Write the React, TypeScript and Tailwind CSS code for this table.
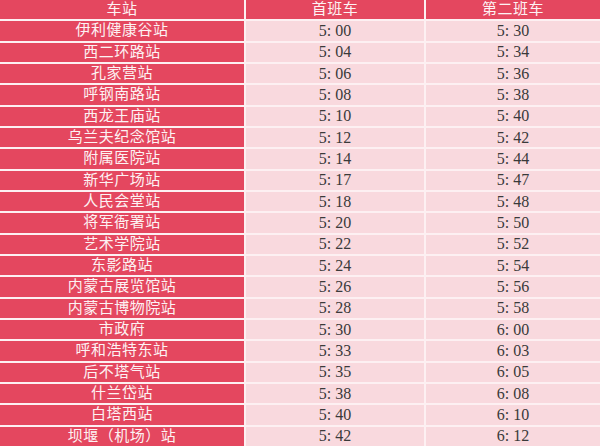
const ROWS: [string, string, string][] = [
  ["伊利健康谷站", "5: 00", "5: 30"],
  ["西二环路站", "5: 04", "5: 34"],
  ["孔家营站", "5: 06", "5: 36"],
  ["呼钢南路站", "5: 08", "5: 38"],
  ["西龙王庙站", "5: 10", "5: 40"],
  ["乌兰夫纪念馆站", "5: 12", "5: 42"],
  ["附属医院站", "5: 14", "5: 44"],
  ["新华广场站", "5: 17", "5: 47"],
  ["人民会堂站", "5: 18", "5: 48"],
  ["将军衙署站", "5: 20", "5: 50"],
  ["艺术学院站", "5: 22", "5: 52"],
  ["东影路站", "5: 24", "5: 54"],
  ["内蒙古展览馆站", "5: 26", "5: 56"],
  ["内蒙古博物院站", "5: 28", "5: 58"],
  ["市政府", "5: 30", "6: 00"],
  ["呼和浩特东站", "5: 33", "6: 03"],
  ["后不塔气站", "5: 35", "6: 05"],
  ["什兰岱站", "5: 38", "6: 08"],
  ["白塔西站", "5: 40", "6: 10"],
  ["坝堰（机场）站", "5: 42", "6: 12"],
];

const FONT = { fontFamily: '"Liberation Serif", "Noto Sans CJK SC", serif' };

export default function App() {
  return (
    <div
      className="grid h-[446px] w-[600px] grid-cols-[244px_178px_1fr] grid-rows-[repeat(21,minmax(0,1fr))] gap-[2px] overflow-hidden bg-[#fdf0f2] leading-none"
      style={FONT}
    >
      <div className="flex items-center justify-center bg-[#e4475f] text-[15px] tracking-[0.5px] text-[#fdf2f3]">车站</div>
      <div className="flex items-center justify-center bg-[#e4475f] text-[15px] tracking-[0.5px] text-[#fdf2f3]">首班车</div>
      <div className="flex items-center justify-center bg-[#e4475f] text-[15px] tracking-[0.5px] text-[#fdf2f3]">第二班车</div>
      {ROWS.map(([name, first, second]) => (
        <div key={name} className="contents">
          <div className="flex items-center justify-center bg-[#e4475f] text-[15px] tracking-[0.5px] text-[#fdf2f3]">{name}</div>
          <div className="flex items-center justify-center bg-[#f9d9de] text-[16px] text-[#3a3a3a]">{first}</div>
          <div className="flex items-center justify-center bg-[#f9d9de] text-[16px] text-[#3a3a3a]">{second}</div>
        </div>
      ))}
    </div>
  );
}
